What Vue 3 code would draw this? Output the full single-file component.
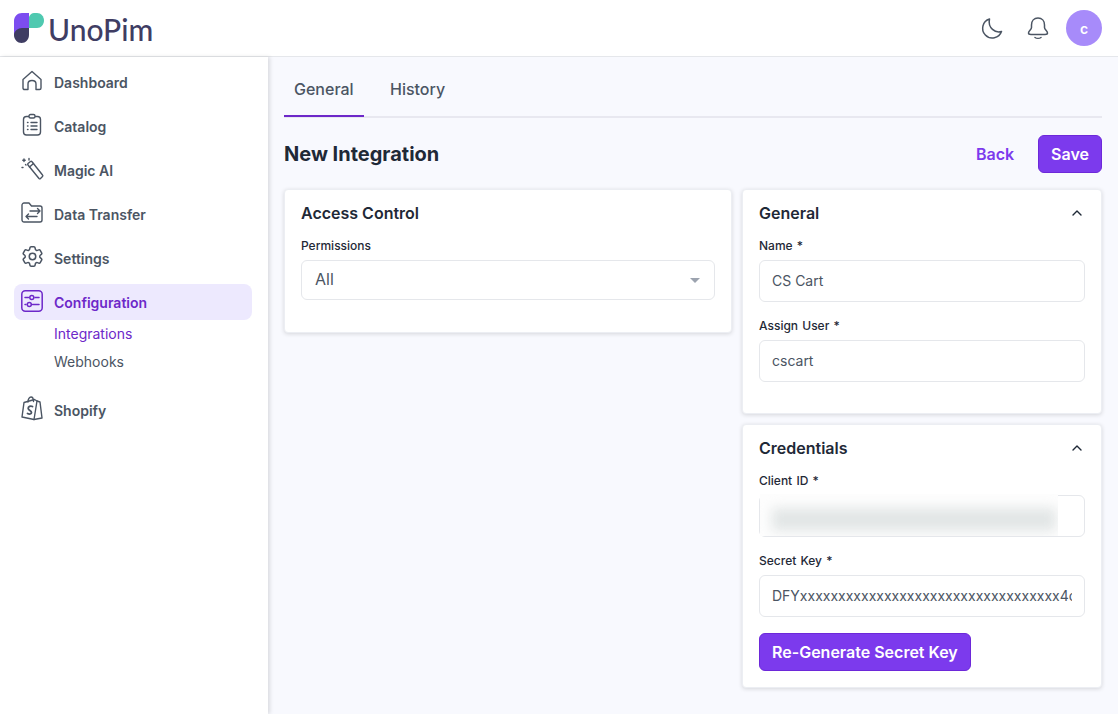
<script setup>
const navTop = [
  { label: "Dashboard", icon: "home" },
  { label: "Catalog", icon: "catalog" },
  { label: "Magic AI", icon: "magic" },
  { label: "Data Transfer", icon: "transfer" },
  { label: "Settings", icon: "settings" },
];
</script>

<template>
  <div class="page">
    <header class="topbar">
      <div class="logo">
        <svg width="30" height="30" viewBox="0 0 30 30">
          <path d="M15 0H8C3.500 0 0 3.500 0 8V22H15Z" fill="#7c4df0" />
          <path d="M0 22C0 18 4 15 8 15H15V22C15 26.500 11.500 30 7.500 30C3.500 30 0 26.500 0 22Z" fill="#3f3d63" />
          <path d="M15 4C16 1.500 18 0 20 0H23C27 0 30 3.500 30 7.500C30 11.500 27 15 23 15H15Z" fill="#4fc9b0" />
        </svg>
        <span class="wordmark">UnoPim</span>
      </div>
      <div class="top-actions">
        <svg class="top-icon moon" viewBox="0 0 24 24" fill="none" stroke="#4b5563" stroke-width="1.500" stroke-linecap="round" stroke-linejoin="round">
          <path d="M9.500 3A9.700 9.700 0 1 0 21.500 15.500C15.500 17.500 7.500 12 9.500 3Z" />
        </svg>
        <svg class="top-icon" viewBox="0 0 24 24" fill="none" stroke="#4b5563" stroke-width="1.500" stroke-linecap="round" stroke-linejoin="round">
          <path d="M12 2C8 2 5.500 5 5.500 9V11.500C5.500 13.500 2.500 15 2.500 17C2.500 18 3.500 18.500 5 18.500H19C20.500 18.500 21.500 18 21.500 17C21.500 15 18.500 13.500 18.500 11.500V9C18.500 5 16 2 12 2Z" />
          <path d="M9 21.500C10.500 22.500 13.500 22.500 15 21.500" />
        </svg>
        <div class="avatar">c</div>
      </div>
    </header>

    <div class="body">
      <aside class="sidebar">
        <a v-for="item in navTop" :key="item.label" class="nav-item">
          <svg class="nav-icon" viewBox="0 0 24 24" fill="none" stroke="#4b5563" stroke-width="1.400" stroke-linecap="round" stroke-linejoin="round">
            <g v-if="item.icon === 'home'" transform="translate(-1 -1.500)">
              <path d="M3 11L12 3L21 11V19.500C21 20.500 20.300 21 19.500 21H16V15.500C16 13.500 14.500 12 12 12C9.500 12 8 13.500 8 15.500V21H4.500C3.700 21 3 20.500 3 19.500Z" />
            </g>
            <g v-else-if="item.icon === 'catalog'" transform="translate(-1 -1)">
              <rect x="3.500" y="3.500" width="17" height="18.500" rx="3" />
              <rect x="9" y="1.500" width="6" height="3.500" rx="1.500" fill="#fff" />
              <path d="M7.500 9.500H8M11 9.500H17M7.500 13H8M11 13H17M7.500 16.500H8M11 16.500H17" />
            </g>
            <g v-else-if="item.icon === 'magic'">
              <path d="M7 5.500L9.500 3.500C10 3.200 10.500 3.200 11 3.700L21.500 17C22 17.500 22 18 21.500 18.500L19.500 20.500C19 21 18.500 21 18 20.500L7 7C6.600 6.500 6.600 6 7 5.500Z" />
              <path d="M8.500 9L12.500 5.500" />
              <path d="M3 1V3.500M1.800 2.200H4.200M8 0.500V2M1 9.500H2M4.500 6.500L5 7" />
            </g>
            <g v-else-if="item.icon === 'transfer'">
              <path d="M1 3C1 2 2 1 3 1H8L10.500 4H19C20.200 4 21 4.800 21 6V18C21 19.200 20.200 20 19 20H3C2 20 1 19.200 1 18Z" />
              <path d="M9 9H19M16.500 6.500L19 9L16.500 11.500M16 14.500H5M7.500 12L5 14.500L7.500 17" />
            </g>
            <g v-else transform="translate(-1.460 -2.460) scale(1.080)">
              <circle cx="12" cy="12" r="3" />
              <path d="M9.594 3.940c.09-.542.56-.94 1.110-.94h2.593c.55 0 1.020.398 1.110.94l.213 1.281c.063.374.313.686.645.870.074.040.147.083.22.127.325.196.72.257 1.075.124l1.217-.456a1.125 1.125 0 0 1 1.370.49l1.296 2.247a1.125 1.125 0 0 1-.26 1.431l-1.003.827c-.293.241-.438.613-.43.992a7.723 7.723 0 0 1 0 .255c-.008.378.137.75.43.991l1.004.827c.424.35.534.955.26 1.430l-1.298 2.247a1.125 1.125 0 0 1-1.369.491l-1.217-.456c-.355-.133-.75-.072-1.076.124a6.470 6.470 0 0 1-.22.128c-.331.183-.581.495-.644.869l-.213 1.281c-.09.543-.56.94-1.110.94h-2.594c-.55 0-1.019-.398-1.110-.94l-.213-1.281c-.062-.374-.312-.686-.644-.87a6.520 6.520 0 0 1-.22-.127c-.325-.196-.72-.257-1.076-.124l-1.217.456a1.125 1.125 0 0 1-1.369-.49l-1.297-2.247a1.125 1.125 0 0 1 .26-1.431l1.004-.827c.292-.24.437-.613.43-.991a6.932 6.932 0 0 1 0-.255c.007-.38-.138-.751-.43-.992l-1.004-.827a1.125 1.125 0 0 1-.26-1.430l1.297-2.247a1.125 1.125 0 0 1 1.370-.491l1.216.456c.356.133.751.072 1.076-.124.072-.044.146-.086.22-.128.332-.183.582-.495.644-.869l.214-1.280Z" />
            </g>
          </svg>
          <span>{{ item.label }}</span>
        </a>

        <a class="nav-item active">
          <svg class="nav-icon" viewBox="0 0 24 24" fill="none" stroke="#6d28c9" stroke-width="1.500" stroke-linecap="round">
            <rect x="0.800" y="0.800" width="20.400" height="20.400" rx="3.500" />
            <path d="M4 7.500H7.500M14 7.500H18M4 14.500H5M11.500 14.500H18" />
            <circle cx="10.800" cy="7.500" r="2" />
            <circle cx="8.300" cy="14.500" r="2" />
          </svg>
          <span>Configuration</span>
        </a>
        <div class="sub-nav">
          <a class="sub-item current">Integrations</a>
          <a class="sub-item">Webhooks</a>
        </div>

        <a class="nav-item">
          <svg class="nav-icon" viewBox="0 0 24 24" fill="none" stroke="#4b5563" stroke-width="1.400" stroke-linecap="round" stroke-linejoin="round">
            <g transform="translate(-1 -2)">
              <path d="M2 21L4 6.500L14.500 3.500L17 5L20 6L22 22L14 23.500Z" />
              <path d="M8 6C8 3 9.500 1 11 1C13 1 13.500 3 13.500 5.500M17 5L14 23.500" />
              <path d="M12.500 10.500C10.500 9.500 8 10.500 8.200 12.500C8.400 14.500 11.500 14.500 11.500 16.500C11.500 18 9.500 18.500 7.500 17.500" stroke-width="1.800" />
            </g>
          </svg>
          <span>Shopify</span>
        </a>
      </aside>

      <main class="content">
        <nav class="tabs">
          <a class="tab selected">General</a>
          <a class="tab">History</a>
        </nav>

        <div class="title-row">
          <h1>New Integration</h1>
          <div class="title-actions">
            <a class="back">Back</a>
            <button class="btn">Save</button>
          </div>
        </div>

        <div class="columns">
          <div class="col-left">
            <section class="card access">
              <h2>Access Control</h2>
              <label>Permissions</label>
              <div class="select">
                <span>All</span>
                <i class="caret"></i>
              </div>
            </section>
          </div>

          <div class="col-right">
            <section class="card general">
              <div class="card-head">
                <h2>General</h2>
                <svg class="chevron" viewBox="0 0 12 8" fill="none" stroke="#1f2937" stroke-width="1.400" stroke-linecap="round" stroke-linejoin="round">
                  <path d="M2 6L6 2L10 6" />
                </svg>
              </div>
              <label>Name *</label>
              <div class="input">CS Cart</div>
              <label class="next">Assign User *</label>
              <div class="input">cscart</div>
            </section>

            <section class="card credentials">
              <div class="card-head">
                <h2>Credentials</h2>
                <svg class="chevron" viewBox="0 0 12 8" fill="none" stroke="#1f2937" stroke-width="1.400" stroke-linecap="round" stroke-linejoin="round">
                  <path d="M2 6L6 2L10 6" />
                </svg>
              </div>
              <label>Client ID *</label>
              <div class="input redacted">
                <div class="smudge"></div>
              </div>
              <label class="next">Secret Key *</label>
              <div class="input clip">
                <span>DFYxxxxxxxxxxxxxxxxxxxxxxxxxxxxxxxxxx4c</span>
              </div>
              <button class="btn regen">Re-Generate Secret Key</button>
            </section>
          </div>
        </div>
      </main>
    </div>
  </div>
</template>

<style>
body {
  margin: 0;
}
</style>

<style scoped>
.page {
  width: 1118px;
  height: 714px;
  overflow: hidden;
  font-family: Inter, "Liberation Sans", sans-serif;
  background: #f8f9fe;
  color: #1f2937;
}

.topbar {
  height: 56px;
  background: #fff;
  border-bottom: 1px solid #e5e7eb;
  display: flex;
  align-items: center;
  justify-content: space-between;
  padding: 0 16px 0 14px;
}

.logo {
  display: flex;
  align-items: center;
  gap: 4px;
}

.wordmark {
  font-family: Lato, sans-serif;
  font-size: 30px;
  font-weight: 500;
  color: #3f3d63;
  line-height: 32px;
  margin-top: 2px;
}

.top-actions {
  display: flex;
  align-items: center;
  gap: 16px;
}

.top-icon {
  width: 24px;
  height: 24px;
}

.moon {
  margin-right: 6px;
}

.avatar {
  width: 36px;
  height: 36px;
  border-radius: 50%;
  background: #a78bfa;
  color: #fff;
  font-size: 14px;
  font-weight: 600;
  display: flex;
  align-items: center;
  justify-content: center;
}

.body {
  display: flex;
  height: 657px;
}

.sidebar {
  width: 238px;
  padding: 7px 16px 0 14px;
  background: #fff;
  box-shadow: 2px 0 4px rgba(0, 0, 0, 0.12);
  flex-shrink: 0;
}

.nav-item {
  display: flex;
  align-items: center;
  height: 36px;
  margin-bottom: 8px;
  padding-left: 7px;
  gap: 9px;
  border-radius: 8px;
  font-size: 14px;
  font-weight: 600;
  color: #4b5563;
}

.nav-icon {
  width: 24px;
  height: 24px;
  flex-shrink: 0;
  overflow: visible;
}

.nav-item.active {
  background: #ede9fe;
  color: #6d28c9;
  margin-bottom: 0;
}

.sub-nav {
  display: flex;
  flex-direction: column;
  padding-left: 40px;
  margin-bottom: 16px;
}

.sub-item {
  height: 28px;
  line-height: 28px;
  font-size: 14px;
  color: #4b5563;
}

.sub-item.current {
  color: #6d28c9;
}

.content {
  flex: 1;
  padding: 7px 16px 0;
}

.tabs {
  display: flex;
  gap: 6px;
  height: 52px;
  border-bottom: 2px solid #e8e8f0;
}

.tab {
  padding: 0 10px;
  height: 52px;
  line-height: 51px;
  font-size: 16px;
  font-weight: 500;
  color: #4b5563;
  box-sizing: border-box;
}

.tab.selected {
  width: 80px;
  border-bottom: 2px solid #6d28c9;
  height: 53px;
  margin-right: 10px;
}

.title-row {
  display: flex;
  align-items: center;
  justify-content: space-between;
  height: 38px;
  margin-top: 17px;
}

h1 {
  margin: 0;
  font-size: 20px;
  font-weight: 700;
  color: #1f2937;
}

.title-actions {
  display: flex;
  align-items: center;
  gap: 24px;
}

.back {
  font-size: 16px;
  font-weight: 600;
  color: #7c3aed;
}

.btn {
  height: 38px;
  padding: 0 12px;
  border: 1px solid #6d28d9;
  border-radius: 6px;
  background: #7c3aed;
  color: #fff;
  font-family: inherit;
  font-size: 16px;
  font-weight: 600;
}

.columns {
  display: flex;
  gap: 10px;
  align-items: flex-start;
  margin-top: 16px;
}

.col-left {
  width: 448px;
}

.col-right {
  width: 360px;
  display: flex;
  flex-direction: column;
  gap: 10px;
}

.card {
  background: #fff;
  border: 1px solid #eceef3;
  border-radius: 4px;
  box-shadow: 0 1px 4px rgba(0, 0, 0, 0.14);
  padding: 13px 16px 0;
  box-sizing: border-box;
}

.access {
  height: 144px;
}

.general {
  height: 225px;
}

.credentials {
  height: 264px;
}

.card-head {
  display: flex;
  justify-content: space-between;
  align-items: center;
}

.chevron {
  width: 12px;
  height: 8px;
  margin-right: 2px;
}

h2 {
  margin: 0;
  font-size: 16px;
  line-height: 20px;
  font-weight: 600;
  color: #1f2937;
}

label {
  display: block;
  margin-top: 15px;
  font-size: 12px;
  line-height: 16px;
  font-weight: 500;
  color: #1f2937;
  word-spacing: 1px;
}

label.next {
  margin-top: 16px;
}

.select {
  margin-top: 6px;
  height: 40px;
  border: 1px solid #e5e7eb;
  border-radius: 6px;
  display: flex;
  align-items: center;
  justify-content: space-between;
  padding: 0 14px 2px 13px;
  box-sizing: border-box;
  font-size: 16px;
  color: #4b5563;
}

.caret {
  width: 0;
  height: 0;
  margin-top: 2px;
  border-left: 5px solid transparent;
  border-right: 5px solid transparent;
  border-top: 5px solid #9ca3af;
}

.input {
  margin-top: 6px;
  height: 42px;
  line-height: 40px;
  border: 1px solid #e5e7eb;
  border-radius: 6px;
  background: #fff;
  padding: 0 12px;
  box-sizing: border-box;
  font-size: 14px;
  color: #4b5563;
}

.redacted {
  position: relative;
}

.smudge {
  position: absolute;
  left: 0;
  right: 26px;
  top: -2px;
  bottom: 0;
  overflow: hidden;
  background: #fdfdfd;
}

.smudge::before {
  content: "";
  position: absolute;
  left: 12px;
  right: 2px;
  top: 14px;
  bottom: 5px;
  background: #e2e6e6;
  filter: blur(6px);
}

.clip {
  overflow: hidden;
  white-space: nowrap;
}

.clip span {
  display: block;
  overflow: hidden;
}

.regen {
  margin-top: 16px;
  display: block;
}
</style>
